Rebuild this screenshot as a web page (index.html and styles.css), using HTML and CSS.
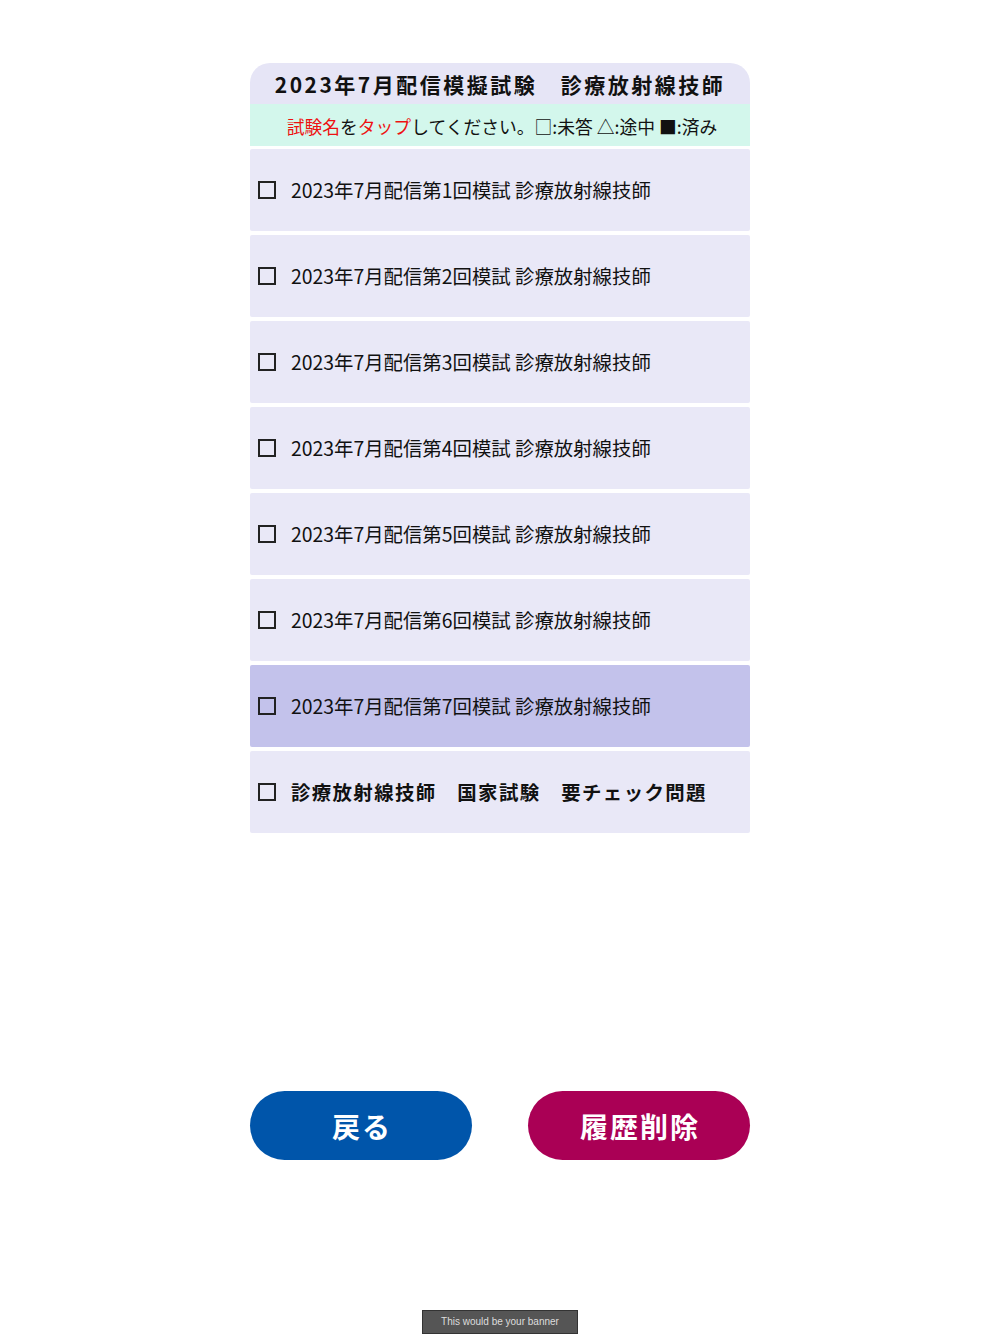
FILE: index.html
```html
<!DOCTYPE html>
<html lang="ja">
<head>
    <meta charset="UTF-8">
    <meta name="viewport" content="width=device-width, initial-scale=1.0">
    <title>2023年7月配信模擬試験　診療放射線技師</title>
    <link rel="stylesheet" href="styles.css">
</head>
<body>
    <div class="container">
        <div class="exam-header">2023年7月配信模擬試験　診療放射線技師</div>
        <div class="guide">
            <span class="red">試験名</span>を<span class="red">タップ</span>してください。□:未答 △:途中 ■:済み
        </div>
        <ul class="exam-list">
            <li class="exam-item"><span class="check"></span>2023年7月配信第1回模試 診療放射線技師</li>
            <li class="exam-item"><span class="check"></span>2023年7月配信第2回模試 診療放射線技師</li>
            <li class="exam-item"><span class="check"></span>2023年7月配信第3回模試 診療放射線技師</li>
            <li class="exam-item"><span class="check"></span>2023年7月配信第4回模試 診療放射線技師</li>
            <li class="exam-item"><span class="check"></span>2023年7月配信第5回模試 診療放射線技師</li>
            <li class="exam-item"><span class="check"></span>2023年7月配信第6回模試 診療放射線技師</li>
            <li class="exam-item active"><span class="check"></span>2023年7月配信第7回模試 診療放射線技師</li>
            <li class="exam-item bold"><span class="check"></span>診療放射線技師　国家試験　要チェック問題</li>
        </ul>
        <div class="buttons">
            <button class="btn back">戻る</button>
            <button class="btn reset">履歴削除</button>
        </div>
    </div>
    <div class="banner">This would be your banner</div>
</body>
</html>
```

FILE: styles.css
```css
* {
    margin: 0;
    padding: 0;
    box-sizing: border-box;
}

body {
    font-family: "Noto Sans CJK JP", "Noto Sans", sans-serif;
    background: #fff;
    color: #111;
}

.container {
    width: 500px;
    margin: 63px auto 0;
}

.exam-header {
    height: 41px;
    background: #e6e5f6;
    border-radius: 20px 20px 0 0;
    text-align: center;
    font-size: 21px;
    font-weight: bold;
    letter-spacing: 2.5px;
    line-height: 42px;
}

.guide {
    height: 42px;
    background: #d3f7ec;
    text-align: center;
    font-size: 17.8px;
    line-height: 44px;
    padding-left: 4px;
}

.red {
    color: #ee1111;
}

.exam-list {
    list-style: none;
    margin-top: 3px;
    display: flex;
    flex-direction: column;
    gap: 4px;
}

.exam-item {
    height: 82px;
    background: #e9e8f7;
    border-radius: 2px;
    display: flex;
    align-items: center;
    padding-left: 8px;
    padding-bottom: 1px;
    font-size: 19.4px;
}

.exam-item.active {
    background: #c3c2eb;
}

.exam-item.bold {
    font-weight: bold;
    letter-spacing: 1.4px;
}

.check {
    width: 18px;
    height: 18px;
    border: 2px solid #222;
    margin-right: 15px;
    flex-shrink: 0;
}

.buttons {
    display: flex;
    justify-content: space-between;
    margin-top: 258px;
}

.btn {
    width: 222px;
    height: 69px;
    border: none;
    border-radius: 35px;
    color: #fff;
    font-family: inherit;
    font-size: 28px;
    font-weight: bold;
    letter-spacing: 2px;
    padding-left: 2px;
    cursor: pointer;
}

.back {
    background: #0055aa;
}

.reset {
    background: #aa0055;
}

.banner {
    position: fixed;
    bottom: 0;
    left: 422px;
    width: 156px;
    height: 24px;
    background: #555;
    border: 1px solid #333;
    color: #ddd;
    font-family: "Liberation Sans", Arial, sans-serif;
    font-size: 10px;
    line-height: 22px;
    text-align: center;
}
```
